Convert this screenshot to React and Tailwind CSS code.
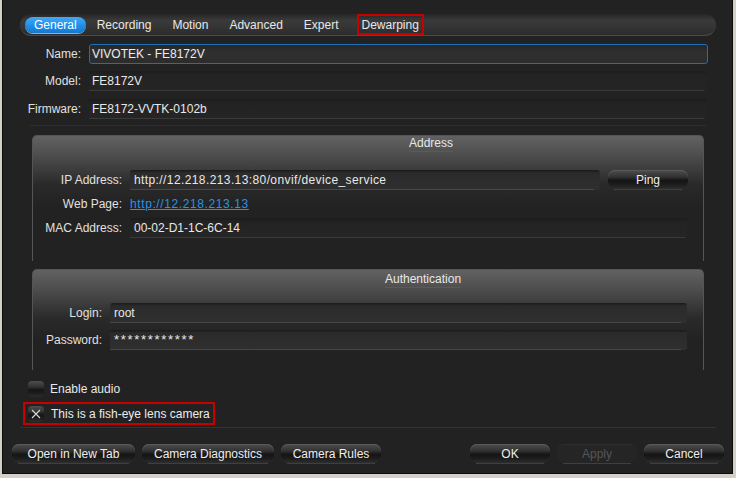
import React from "react";

const btnBg =
  "bg-[linear-gradient(to_bottom,#4e4e4e_0%,#333_35%,#151515_55%,#1c1c1c_75%,#2e2e2e_100%)]";

function Btn({ children, w, disabled }) {
  return (
    <div className={`relative h-[20px] ${w}`}>
      <div
        className={`h-[19px] rounded-[7px] flex items-center justify-center ${
          disabled
            ? "bg-[#252525] border-t border-[#2e2e2e] text-[#555555]"
            : `${btnBg} text-[#eeeeee] shadow-[inset_0_1px_0_#5a5a5a]`
        }`}
      >
        {children}
      </div>
      <div className="absolute left-[6px] right-[6px] bottom-0 h-px bg-[#3f3f3f]" />
    </div>
  );
}

function Check({ checked }) {
  return (
    <div className={`relative w-[16px] h-[16px] rounded-[4px] ${btnBg} flex items-center justify-center shrink-0`}>
      {checked && (
        <svg width="10" height="10" viewBox="0 0 10 10">
          <path d="M1 1 L9 9 M9 1 L1 9" stroke="#d8d8d8" strokeWidth="1.1" fill="none" />
        </svg>
      )}
    </div>
  );
}

function ROField({ w, children }) {
  return (
    <div className={`${w} h-[20px] relative bg-[linear-gradient(to_bottom,#1c1c1c,#232323_20%,#252525)] flex items-center pl-[3px] text-[#e8e8e8]`}>
      {children}
      <div className="absolute left-0 right-[2px] bottom-0 h-px bg-[#3a3a3a]" />
    </div>
  );
}

function EditField({ w, children }) {
  return (
    <div className={`${w} h-[20px] relative rounded-[3px] bg-[linear-gradient(to_bottom,#1a1a1a,#2b2b2b_15%,#2f2f2f)] flex items-center pl-[4px] text-[#e8e8e8]`}>
      {children}
      <div className="absolute left-0 right-[6px] bottom-0 h-px bg-[#474747]" />
    </div>
  );
}

function Tab({ children, active, extra = "" }) {
  return (
    <div
      className={`h-[16px] px-[9px] flex items-center rounded-full ${
        active
          ? "bg-[linear-gradient(to_bottom,#43a9f7,#1d8be6_60%,#1479d0)] text-white shadow-[0_1px_0_#6cb8f0]"
          : "text-[#e8e8e8]"
      } ${extra}`}
    >
      {children}
    </div>
  );
}

const groupBg =
  "bg-[linear-gradient(to_bottom,#626262_0px,#4a4a4a_22px,#2a2a2a_48px,#222222_70px)]";

export default function App() {
  return (
    <div className="w-[736px] h-[478px] bg-[#d4d0c8] pl-[2px] pr-[3px] pb-[4px] font-['Liberation_Sans',Arial,sans-serif] text-[12px] leading-[14px]">
      <div className="h-full bg-[#222222] border-x border-b border-[#0c0c0c] flex flex-col text-[#e6e6e6]">
        {/* Tab bar */}
        <div className="ml-[17px] mt-[14px] w-[696px] h-[22px] rounded-full bg-[linear-gradient(to_bottom,#262626,#3a3a3a_30%,#353535_60%,#2c2c2c)] border-b border-[#4a4a4a] flex items-center pl-[5px]">
          <Tab active>General</Tab>
          <Tab extra="ml-[2px]">Recording</Tab>
          <Tab extra="ml-[3px]">Motion</Tab>
          <Tab extra="ml-[3px]">Advanced</Tab>
          <Tab extra="ml-[3px]">Expert</Tab>
          <div className="ml-[9px] h-[21px] border-2 border-[#c80000] px-[3px] flex items-center text-[#e8e8e8]">
            Dewarping
          </div>
        </div>

        {/* Top fields */}
        <div className="mt-[8px] flex items-center h-[20px]">
          <div className="w-[78px] text-right text-[#e0e0e0]">Name:</div>
          <div className="ml-[8px] w-[619px] h-[20px] rounded-[3px] border border-[#1f6fb8] bg-[linear-gradient(to_bottom,#262626,#303030_40%,#2c2c2c)] flex items-center pl-[2px] text-[#ececec]">
            VIVOTEK - FE8172V
          </div>
        </div>
        <div className="mt-[7px] flex items-center h-[20px]">
          <div className="w-[78px] text-right text-[#e0e0e0]">Model:</div>
          <div className="ml-[8px]">
            <ROField w="w-[617px]">FE8172V</ROField>
          </div>
        </div>
        <div className="mt-[8px] flex items-center h-[20px]">
          <div className="w-[78px] text-right text-[#e0e0e0]">Firmware:</div>
          <div className="ml-[8px]">
            <ROField w="w-[617px]">FE8172-VVTK-0102b</ROField>
          </div>
        </div>
        <div className="mt-[6px] ml-[27px] w-[676px] h-px bg-[#2f2f2f]" />

        {/* Address group */}
        <div className={`mt-[9px] ml-[29px] w-[672px] h-[126px] rounded-t-[5px] border border-b-0 border-[#555] ${groupBg}`}>
          <div className="pl-[376px] h-[15px] flex items-center">
            <span className="border-b border-[#5a5a5a] pb-px text-[#e8e8e8]">Address</span>
          </div>
          <div className="mt-[19px] flex items-center h-[20px]">
            <div className="w-[89px] text-right text-[#e0e0e0]">IP Address:</div>
            <div className="ml-[8px]">
              <EditField w="w-[470px]">
                <span className="tracking-[0.4px]">http://12.218.213.13:80/onvif/device_service</span>
              </EditField>
            </div>
            <div className="ml-[8px]">
              <Btn w="w-[80px]">Ping</Btn>
            </div>
          </div>
          <div className="flex items-center h-[28px]">
            <div className="w-[89px] text-right text-[#e0e0e0]">Web Page:</div>
            <div className="ml-[8px] text-[#2b92ea] underline tracking-[0.6px]">http://12.218.213.13</div>
          </div>
          <div className="flex items-center h-[20px]">
            <div className="w-[89px] text-right text-[#e0e0e0]">MAC Address:</div>
            <div className="ml-[8px]">
              <ROField w="w-[557px]">
                <span className="pl-px">00-02-D1-1C-6C-14</span>
              </ROField>
            </div>
          </div>
        </div>

        {/* Authentication group */}
        <div className={`mt-[8px] ml-[29px] w-[672px] h-[101px] rounded-t-[5px] border border-b-0 border-[#555] ${groupBg}`}>
          <div className="pl-[352px] pt-[2px] h-[17px] flex items-center">
            <span className="border-b border-[#5a5a5a] pb-px text-[#e8e8e8]">Authentication</span>
          </div>
          <div className="mt-[16px] flex items-center h-[20px]">
            <div className="w-[69px] text-right text-[#e0e0e0]">Login:</div>
            <div className="ml-[8px]">
              <EditField w="w-[577px]">root</EditField>
            </div>
          </div>
          <div className="mt-[7px] flex items-center h-[20px]">
            <div className="w-[69px] text-right text-[#e0e0e0]">Password:</div>
            <div className="ml-[8px]">
              <EditField w="w-[577px]">
                <span className="text-[13px] tracking-[1.7px]">************</span>
              </EditField>
            </div>
          </div>
        </div>

        {/* Checkboxes */}
        <div className="mt-[11px] ml-[25px] flex items-center h-[16px]">
          <Check />
          <span className="ml-[6px] text-[#e8e8e8]">Enable audio</span>
        </div>
        <div className="mt-[5px] ml-[20px] w-[192px] h-[23px] border-2 border-[#c80000] flex items-center pl-[3px]">
          <Check checked />
          <span className="ml-[7px] text-[#ececec]">This is a fish-eye lens camera</span>
        </div>
        <div className="mt-[2px] ml-[17px] w-[696px] h-px bg-[#333333]" />

        {/* Bottom buttons */}
        <div className="mt-[16px] flex items-center pl-[9px] pr-[8px]">
          <Btn w="w-[123px]">Open in New Tab</Btn>
          <div className="ml-[7px]">
            <Btn w="w-[132px]">Camera Diagnostics</Btn>
          </div>
          <div className="ml-[7px]">
            <Btn w="w-[100px]">Camera Rules</Btn>
          </div>
          <div className="flex-1" />
          <Btn w="w-[80px]">OK</Btn>
          <div className="ml-[7px]">
            <Btn w="w-[80px]" disabled>Apply</Btn>
          </div>
          <div className="ml-[7px]">
            <Btn w="w-[80px]">Cancel</Btn>
          </div>
        </div>
      </div>
    </div>
  );
}
